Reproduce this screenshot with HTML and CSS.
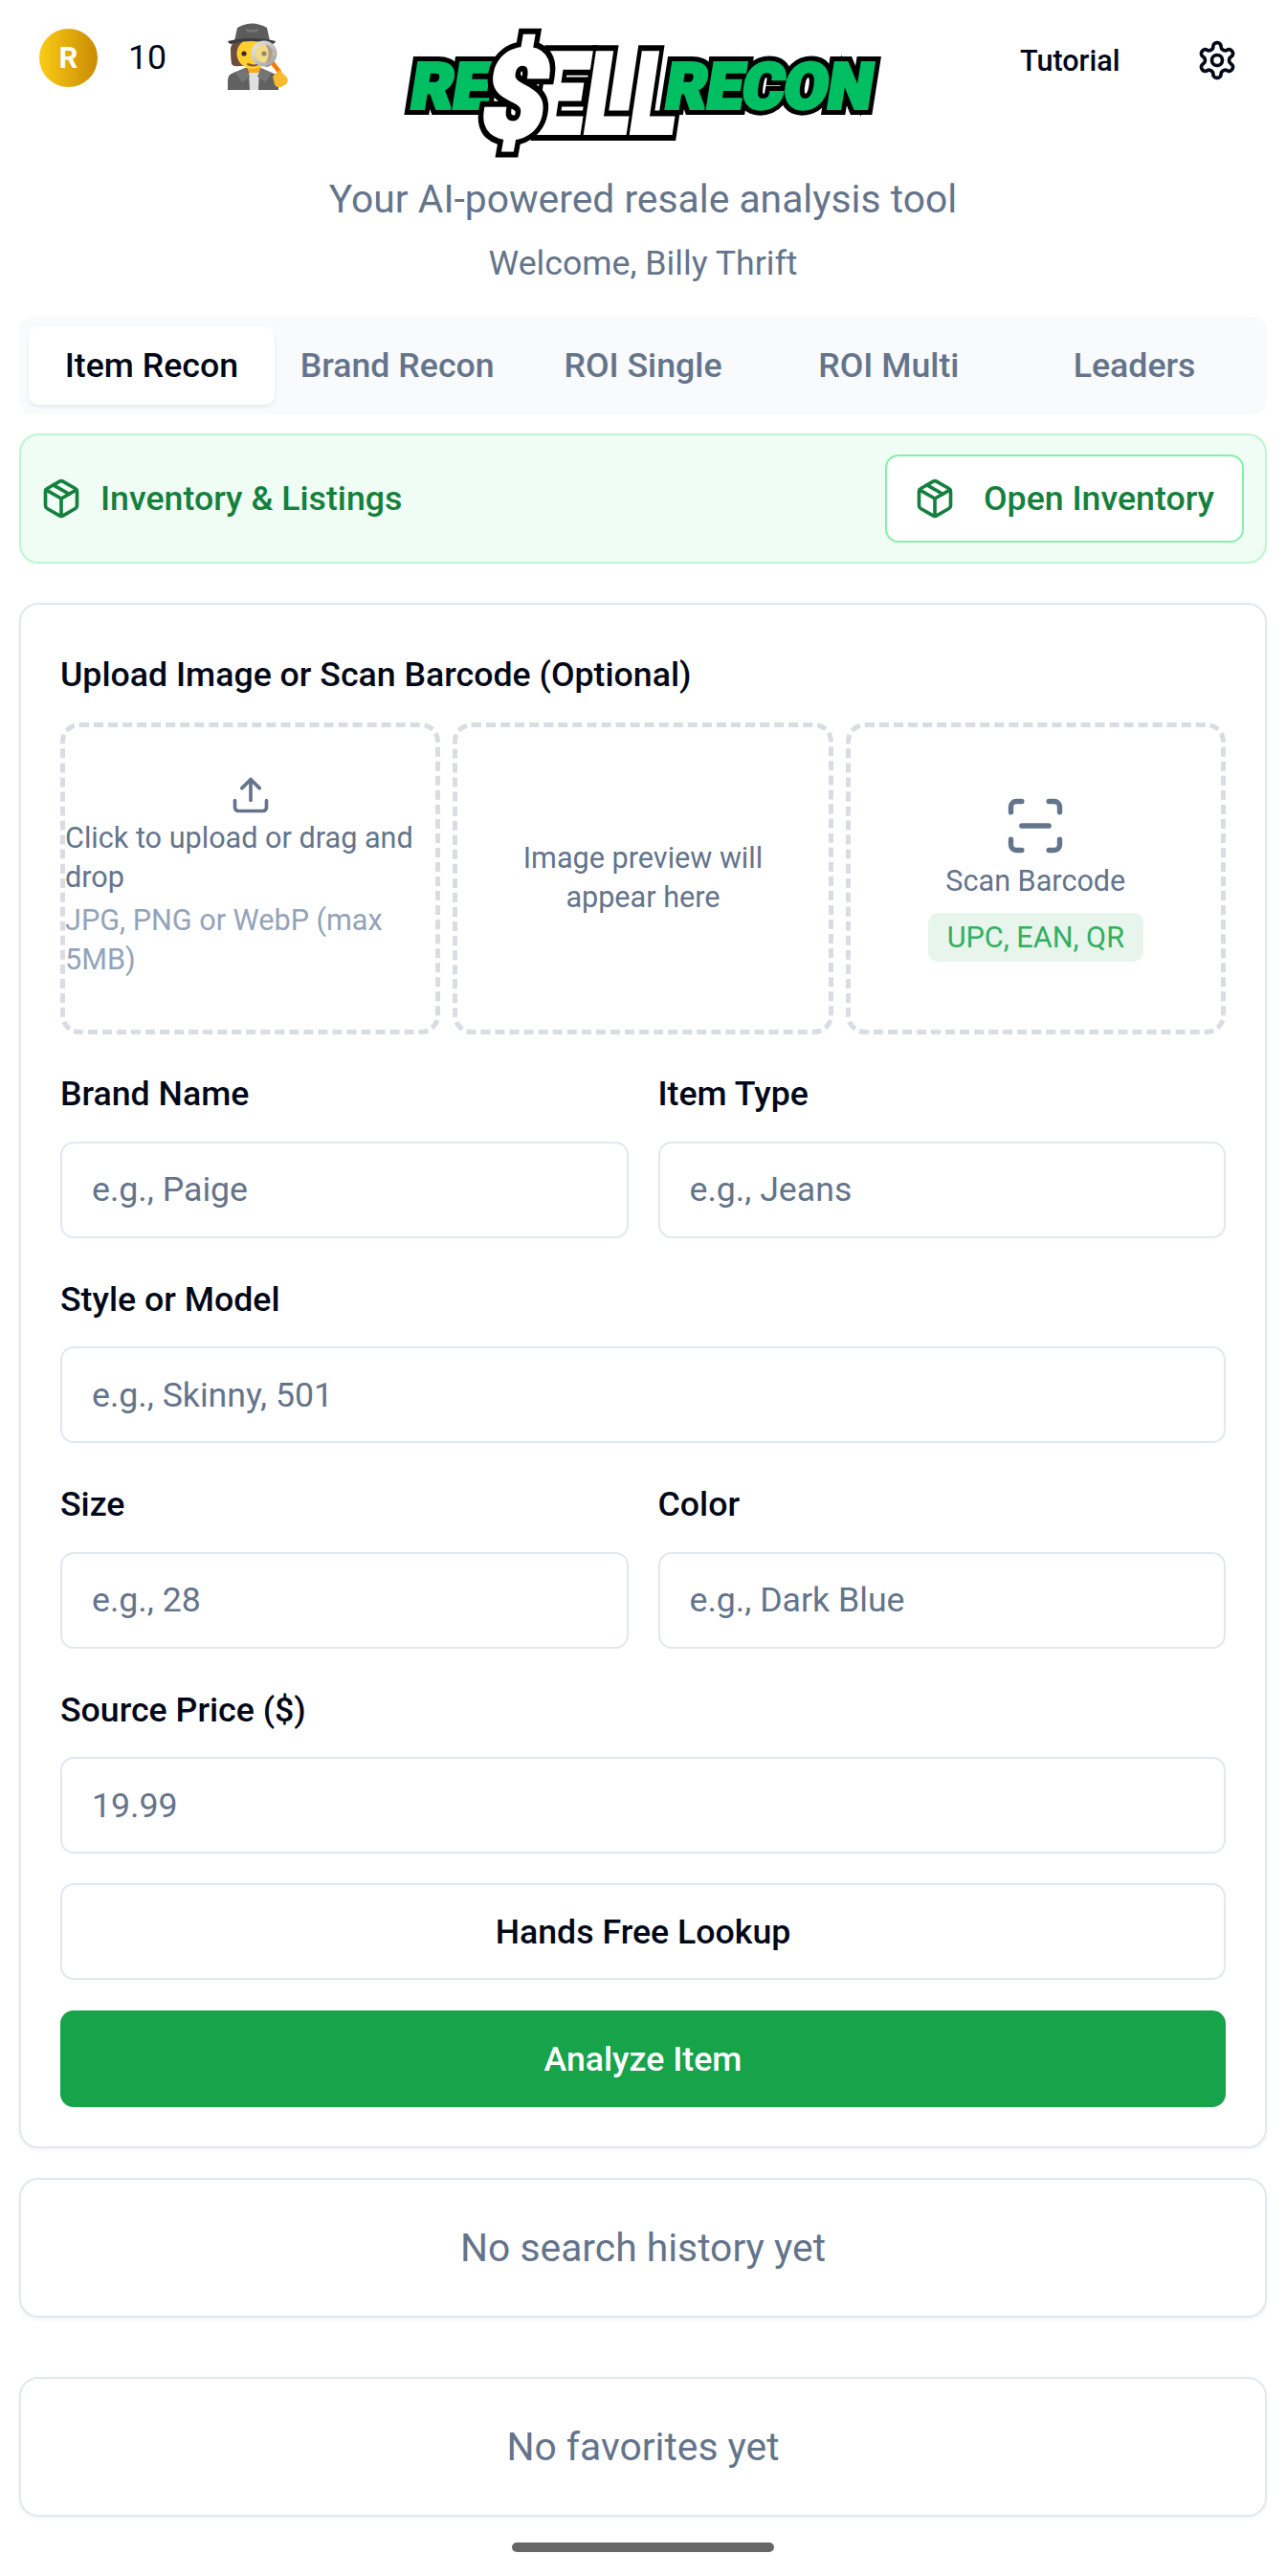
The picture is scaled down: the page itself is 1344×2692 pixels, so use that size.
FILE: index.html
```html
<!DOCTYPE html>
<html lang="en">
<head>
<meta charset="utf-8">
<title>Resell Recon</title>
<link rel="stylesheet" href="styles.css">
</head>
<body>
<main class="page">
  <header class="header">
    <div class="credits">
      <span class="coin">R</span>
      <span class="credit-count">10</span>
      <svg class="detective" viewBox="0 0 68 72" aria-label="detective">
        <defs>
          <linearGradient id="lens" x1="0" y1="0" x2="1" y2="1"><stop offset="0" stop-color="#e6e6e6"/><stop offset="1" stop-color="#a0a0a0"/></linearGradient>
        </defs>
        <path d="M0 70V60q0-6 6-8l12-5h16l12 5q7 2 7 8v10z" fill="#616161"/>
        <path d="M22 50h11l-1 20h-9z" fill="#e0e0e0"/>
        <path d="M20 46h15l-2 6H22z" fill="#f4a81d"/>
        <path d="M8 52l11-5 4 9-8 6zM46 52l-11-5-4 9 8 6z" fill="#757575"/>
        <path d="M3 28q0-12 22-12t22 12q0 10-1 15-3 4-8 2H12q-6 1-8-2-1-7-1-15z" fill="#6d4c41"/>
        <ellipse cx="26" cy="32" rx="16.5" ry="16" fill="#fdd030"/>
        <circle cx="17" cy="32" r="2.6" fill="#3e2723"/>
        <path d="M21 43q6 3 11 0" fill="none" stroke="#795548" stroke-width="2" stroke-linecap="round"/>
        <path d="M10 5q15-9 31 0l3 14H7z" fill="#5c5c5c"/>
        <path d="M0 19q10-3 25-3t25 3q-1 3-4 3-10-3-21-3T4 22q-3 0-4-3z" fill="#3d3d3d"/>
        <path d="M19 7q6 3 13 0" fill="none" stroke="#7a7a7a" stroke-width="2"/>
        <path d="M47 42l7 9" stroke="#f57c00" stroke-width="4.5" stroke-linecap="round"/>
        <circle cx="38" cy="32" r="11.5" fill="#e8e4d0" fill-opacity=".55" stroke="url(#lens)" stroke-width="4"/>
        <circle cx="38" cy="32" r="2.6" fill="#8d8a7a"/>
        <path d="M47 56l7-7 8 8q2 4-1 7l-5 3q-5 1-7-3z" fill="#fbb92d"/>
      </svg>
    </div>
    <svg class="logo" viewBox="0 0 505 135" role="img" aria-label="Resell Recon">
      <defs>
        <text id="lg-re" class="logo-re" x="7" y="83" textLength="82" lengthAdjust="spacingAndGlyphs">RE</text>
        <text id="lg-recon" class="logo-recon" x="273" y="83" textLength="216" lengthAdjust="spacingAndGlyphs">RECON</text>
        <text id="lg-ell" class="logo-ell" x="137" y="109" textLength="146" lengthAdjust="spacingAndGlyphs">ELL</text>
        <text id="lg-dollar" class="logo-dollar" x="78" y="113" textLength="68" lengthAdjust="spacingAndGlyphs">$</text>
      </defs>
      <use class="logo-line-small" href="#lg-re"/>
      <use class="logo-line-small" href="#lg-recon"/>
      <use class="logo-fill-small" href="#lg-re"/>
      <use class="logo-fill-small" href="#lg-recon"/>
      <use class="logo-line-big" href="#lg-ell"/>
      <use class="logo-fill-big" href="#lg-ell"/>
      <use class="logo-line-big" href="#lg-dollar"/>
      <use class="logo-fill-big" href="#lg-dollar"/>
    </svg>
    <div class="header-right">
      <span class="tutorial">Tutorial</span>
      <svg class="icon icon-gear" viewBox="0 0 24 24"><path d="M12.22 2h-.44a2 2 0 0 0-2 2v.18a2 2 0 0 1-1 1.73l-.43.25a2 2 0 0 1-2 0l-.15-.08a2 2 0 0 0-2.73.73l-.22.38a2 2 0 0 0 .73 2.73l.15.1a2 2 0 0 1 1 1.72v.51a2 2 0 0 1-1 1.74l-.15.09a2 2 0 0 0-.73 2.73l.22.38a2 2 0 0 0 2.73.73l.15-.08a2 2 0 0 1 2 0l.43.25a2 2 0 0 1 1 1.73V20a2 2 0 0 0 2 2h.44a2 2 0 0 0 2-2v-.18a2 2 0 0 1 1-1.73l.43-.25a2 2 0 0 1 2 0l.15.08a2 2 0 0 0 2.73-.73l.22-.39a2 2 0 0 0-.73-2.73l-.15-.08a2 2 0 0 1-1-1.74v-.5a2 2 0 0 1 1-1.74l.15-.09a2 2 0 0 0 .73-2.73l-.22-.38a2 2 0 0 0-2.73-.73l-.15.08a2 2 0 0 1-2 0l-.43-.25a2 2 0 0 1-1-1.73V4a2 2 0 0 0-2-2z"/><circle cx="12" cy="12" r="3"/></svg>
    </div>
  </header>

  <p class="tagline">Your AI-powered resale analysis tool</p>
  <p class="welcome">Welcome, Billy Thrift</p>

  <nav class="tabs">
    <span class="tab tab-active">Item Recon</span>
    <span class="tab">Brand Recon</span>
    <span class="tab">ROI Single</span>
    <span class="tab">ROI Multi</span>
    <span class="tab">Leaders</span>
  </nav>

  <section class="inventory">
    <div class="inventory-title">
      <svg class="icon" viewBox="0 0 24 24"><path d="M11 21.73a2 2 0 0 0 2 0l7-4A2 2 0 0 0 21 16V8a2 2 0 0 0-1-1.73l-7-4a2 2 0 0 0-2 0l-7 4A2 2 0 0 0 3 8v8a2 2 0 0 0 1 1.73z"/><path d="M12 22V12"/><path d="m3.3 7 8.7 5 8.7-5"/><path d="m7.5 4.27 9 5.15"/></svg>
      <span>Inventory &amp; Listings</span>
    </div>
    <button class="inventory-btn">
      <svg class="icon" viewBox="0 0 24 24"><path d="M11 21.73a2 2 0 0 0 2 0l7-4A2 2 0 0 0 21 16V8a2 2 0 0 0-1-1.73l-7-4a2 2 0 0 0-2 0l-7 4A2 2 0 0 0 3 8v8a2 2 0 0 0 1 1.73z"/><path d="M12 22V12"/><path d="m3.3 7 8.7 5 8.7-5"/><path d="m7.5 4.27 9 5.15"/></svg>
      <span>Open Inventory</span>
    </button>
  </section>

  <section class="card form-card">
    <label class="label upload-label">Upload Image or Scan Barcode (Optional)</label>
    <div class="zones">
      <div class="zone zone-upload">
        <svg class="icon icon-upload" viewBox="0 0 24 24"><path d="M21 15v4a2 2 0 0 1-2 2H5a2 2 0 0 1-2-2v-4"/><path d="M17 8l-5-5-5 5"/><path d="M12 3v12"/></svg>
        <p class="zone-main">Click to upload or drag and drop</p>
        <p class="zone-sub">JPG, PNG or WebP (max 5MB)</p>
      </div>
      <div class="zone zone-preview">
        <p>Image preview will appear here</p>
      </div>
      <div class="zone zone-scan">
        <svg class="icon icon-scan" viewBox="0 0 24 24"><path d="M3 7V5a2 2 0 0 1 2-2h2"/><path d="M17 3h2a2 2 0 0 1 2 2v2"/><path d="M21 17v2a2 2 0 0 1-2 2h-2"/><path d="M7 21H5a2 2 0 0 1-2-2v-2"/><path d="M7 12h10"/></svg>
        <p>Scan Barcode</p>
        <span class="pill">UPC, EAN, QR</span>
      </div>
    </div>

    <div class="fields">
      <div class="field"><label class="label">Brand Name</label><input class="input" placeholder="e.g., Paige"></div>
      <div class="field"><label class="label">Item Type</label><input class="input" placeholder="e.g., Jeans"></div>
      <div class="field field-wide"><label class="label">Style or Model</label><input class="input" placeholder="e.g., Skinny, 501"></div>
      <div class="field"><label class="label">Size</label><input class="input" placeholder="e.g., 28"></div>
      <div class="field"><label class="label">Color</label><input class="input" placeholder="e.g., Dark Blue"></div>
      <div class="field field-wide"><label class="label">Source Price ($)</label><input class="input" placeholder="19.99"></div>
    </div>

    <button class="btn btn-outline">Hands Free Lookup</button>
    <button class="btn btn-primary">Analyze Item</button>
  </section>

  <section class="card empty empty-history">No search history yet</section>
  <section class="card empty empty-favorites">No favorites yet</section>
</main>
<div class="home-bar"></div>
</body>
</html>
```
FILE: styles.css
```css
* { box-sizing: border-box; }
html, body { margin: 0; padding: 0; background: #fff; }
body {
  font-family: Roboto, "Noto Sans", sans-serif;
  color: #020817;
  height: 2692px;
  position: relative;
  overflow: hidden;
}
p { margin: 0; }
.page { padding: 0 20px; }

.header {
  display: flex;
  align-items: flex-start;
  height: 176px;
  padding-top: 25px;
}
.credits {
  display: flex;
  align-items: center;
  width: 400px;
  padding-left: 21px;
  height: 70px;
}
.coin {
  width: 61px;
  height: 61px;
  border-radius: 50%;
  background: linear-gradient(90deg, #facc15, #ca8a04);
  color: #fff;
  font-weight: 700;
  font-size: 31px;
  display: flex;
  align-items: center;
  justify-content: center;
}
.credit-count { font-size: 35.7px; margin-left: 32px; width: 37px; }
.detective { width: 68px; height: 72px; margin-left: 67px; }
.logo { width: 505px; height: 135px; margin-top: 5px; overflow: visible; }
.logo text {
  font-family: Roboto, "Liberation Sans", sans-serif;
  font-weight: 900;
  stroke-linejoin: miter;
}
.logo .logo-re, .logo .logo-recon { font-size: 66px; transform: skewX(-9deg) translateX(13.1px); }
.logo .logo-ell { font-size: 118px; transform: skewX(-8.5deg) translateX(16.3px); }
.logo .logo-dollar { font-size: 128px; transform: skewX(-10deg) translateX(20px); }
.logo-line-small { fill: #000; stroke: #000; stroke-width: 14px; }
.logo-fill-small { fill: #00bf63; stroke: #00bf63; stroke-width: 4px; }
.logo-line-big { fill: #000; stroke: #000; stroke-width: 16px; }
.logo-fill-big { fill: #fff; stroke: #fff; stroke-width: 4px; }
.header-right {
  flex: 1;
  display: flex;
  align-items: center;
  height: 76px;
  padding-left: 141px;
}
.tutorial { font-size: 30.6px; font-weight: 500; width: 105px; }
.icon {
  width: 44px;
  height: 44px;
  fill: none;
  stroke: currentColor;
  stroke-width: 2;
  stroke-linecap: round;
  stroke-linejoin: round;
  flex: none;
}
.icon-gear { margin-left: 79px; }

.tagline {
  text-align: center;
  color: #64748b;
  font-size: 40.8px;
  line-height: 64px;
}
.welcome {
  text-align: center;
  color: #64748b;
  font-size: 35.7px;
  line-height: 50px;
  margin-top: 10px;
}

.tabs {
  display: grid;
  grid-template-columns: repeat(5, 1fr);
  align-items: center;
  margin-top: 31px;
  height: 102px;
  padding: 10px;
  background: #f8fafc;
  border-radius: 14px;
}
.tab {
  height: 82px;
  display: flex;
  align-items: center;
  justify-content: center;
  font-size: 35.7px;
  font-weight: 500;
  color: #64748b;
  border-radius: 10px;
}
.tab-active {
  background: #fff;
  color: #020817;
  box-shadow: 0 2px 4px rgba(15, 23, 42, .07);
}

.inventory {
  margin-top: 20px;
  height: 136px;
  background: #f0fdf4;
  border: 2px solid #bbf7d0;
  border-radius: 20px;
  display: flex;
  align-items: center;
  justify-content: space-between;
  padding: 0 22px 0 20px;
  color: #15803d;
  font-size: 35.7px;
  font-weight: 500;
}
.inventory-title { display: flex; align-items: center; gap: 19px; }
.inventory-btn {
  width: 375px;
  height: 92px;
  background: #fff;
  border: 2px solid #86efac;
  border-radius: 14px;
  color: #15803d;
  font: inherit;
  display: flex;
  align-items: center;
  justify-content: flex-start;
  gap: 29px;
  padding: 0 0 0 28px;
}

.card {
  background: #fff;
  border: 2px solid #e2e8f0;
  border-radius: 20px;
  box-shadow: 0 2px 4px rgba(15, 23, 42, .05);
}
.form-card {
  margin-top: 41px;
  height: 1615px;
  padding: 0 41px;
}
.label {
  display: block;
  font-size: 35.7px;
  font-weight: 500;
  line-height: 40px;
  color: #020817;
}
.upload-label { margin-top: 53px; }
.zones {
  display: grid;
  grid-template-columns: repeat(3, 1fr);
  gap: 13px;
  margin-top: 30px;
  height: 326px;
}
.zone {
  border: 5px dashed #d9dce3;
  border-radius: 20px;
  display: flex;
  flex-direction: column;
  align-items: center;
  justify-content: center;
  color: #64748b;
  font-size: 30.6px;
  line-height: 41px;
  text-align: center;
  padding-bottom: 2px;
}
.zone-upload { align-items: stretch; text-align: left; padding-bottom: 4px; }
.icon-upload { align-self: center; margin-bottom: 2px; }
.zone-sub { color: #94a3b8; margin-top: 4px; }
.zone-preview p { width: 280px; }
.icon-scan { width: 68px; height: 68px; stroke-width: 1.9; margin-bottom: 3px; }
.pill {
  margin-top: 13px;
  background: #e8f5ec;
  color: #31b060;
  border-radius: 10px;
  padding: 4px 20px;
  font-size: 30.6px;
  line-height: 43px;
}

.fields {
  display: grid;
  grid-template-columns: 1fr 1fr;
  column-gap: 31px;
  row-gap: 44px;
  margin-top: 42px;
}
.field { min-width: 0; }
.field-wide { grid-column: 1 / -1; }
.input {
  display: block;
  width: 100%;
  height: 101px;
  margin-top: 29.5px;
  border: 2px solid #e2e8f0;
  border-radius: 14px;
  padding: 0 31px;
  font: 400 35.7px Roboto, sans-serif;
  color: #020817;
  background: #fff;
}
.input::placeholder { color: #64748b; opacity: 1; }

.btn {
  display: block;
  width: 100%;
  height: 101px;
  border-radius: 14px;
  font: 500 35.7px Roboto, sans-serif;
}
.btn-outline {
  margin-top: 31px;
  background: #fff;
  border: 2px solid #e2e8f0;
  color: #020817;
}
.btn-primary {
  margin-top: 32px;
  background: #16a34a;
  border: 0;
  color: #fff;
}

.empty {
  height: 146px;
  display: flex;
  align-items: center;
  justify-content: center;
  color: #64748b;
  font-size: 40.8px;
}
.empty-history { margin-top: 31px; }
.empty-favorites { margin-top: 62px; }

.home-bar {
  position: absolute;
  left: 535px;
  top: 2657px;
  width: 274px;
  height: 10px;
  border-radius: 5px;
  background: #666;
}
```
